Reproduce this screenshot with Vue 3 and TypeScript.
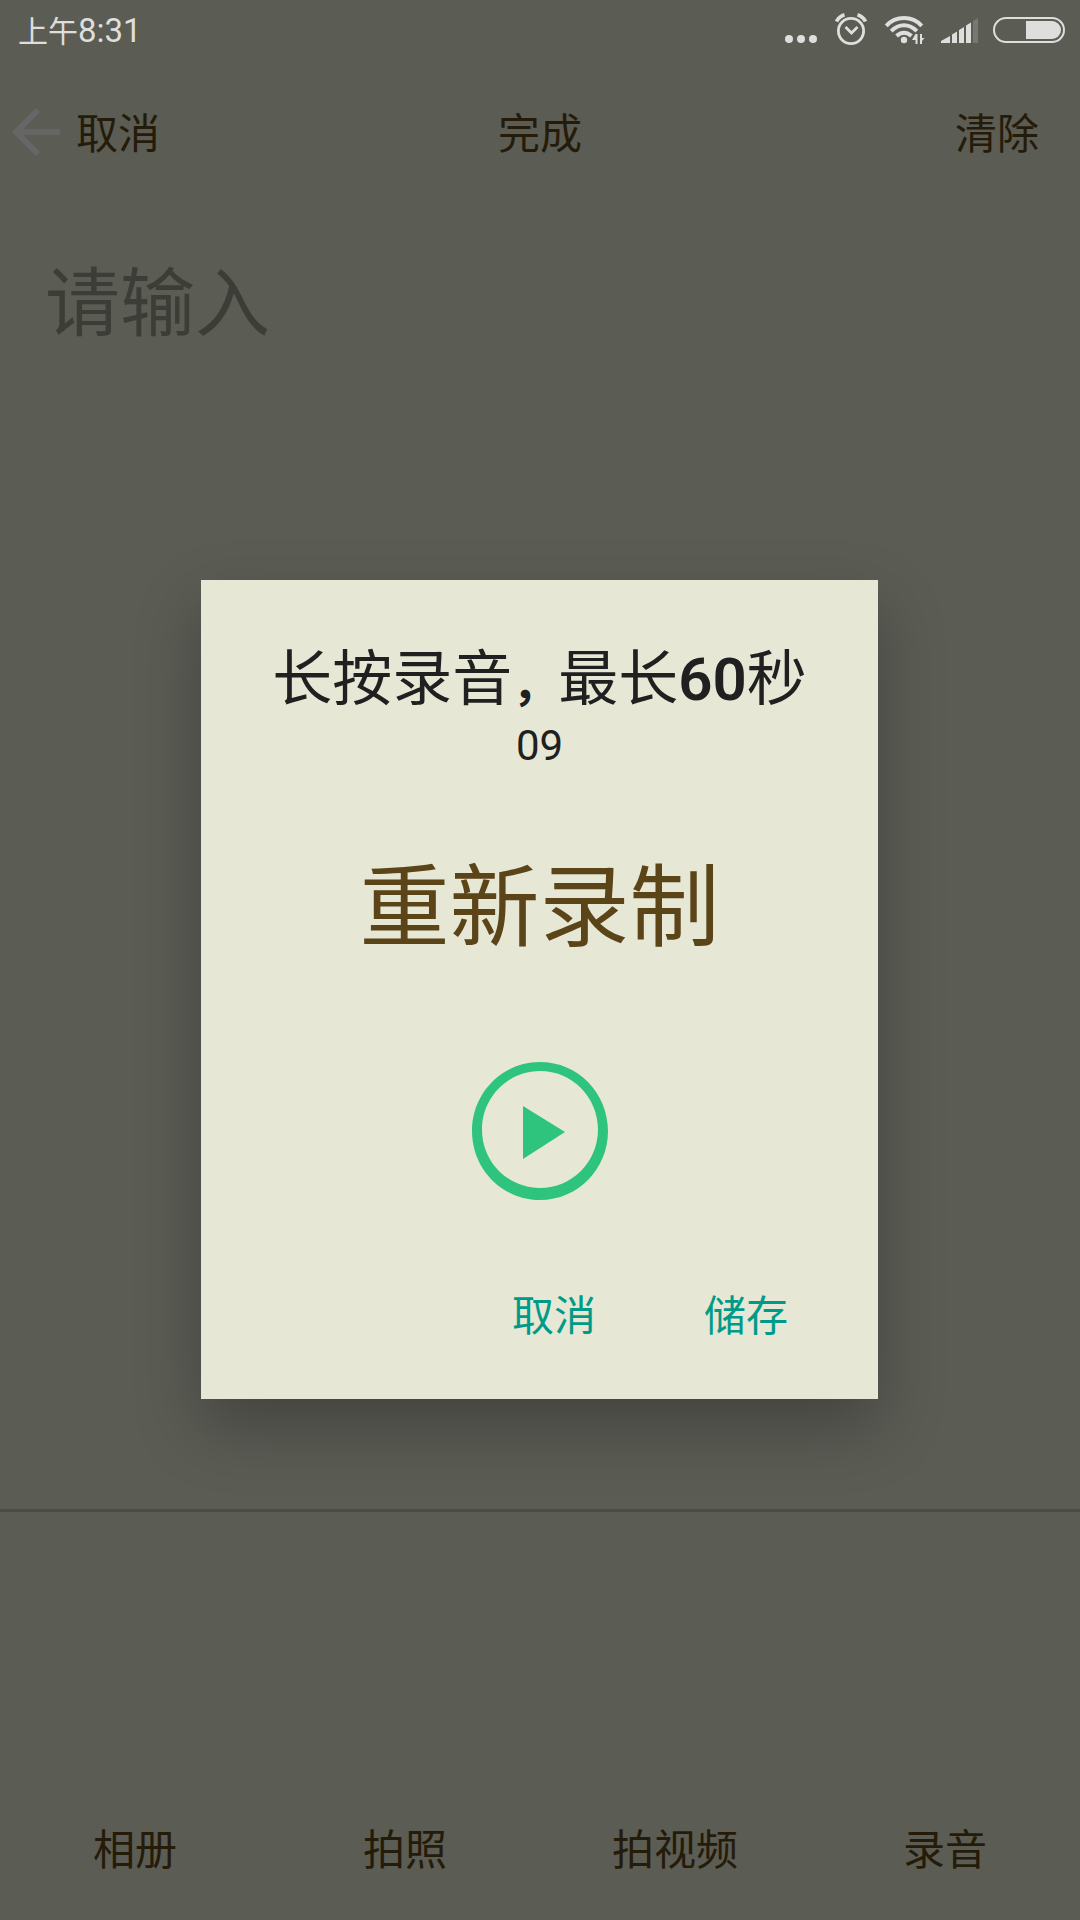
<script setup lang="ts">
import { ref } from 'vue'

const note = ref('')
const seconds = ref('09')
const tools = ['相册', '拍照', '拍视频', '录音']
</script>

<template>
  <div class="screen">
    <div class="status">
      <div class="time"><span class="period">上午</span>8:31</div>
      <div class="icons">
        <svg width="32" height="40" viewBox="0 0 32 40" fill="#dededc">
          <circle cx="2" cy="29" r="4" />
          <circle cx="14" cy="29" r="4" />
          <circle cx="26" cy="29" r="4" />
        </svg>
        <svg width="32" height="40" viewBox="0 0 32 40" fill="none" stroke="#dededc">
          <circle cx="16" cy="21" r="12.6" stroke-width="2.8" />
          <path d="M10.5 17l6 6 6-6" stroke-width="2.8" />
          <path d="M1.500 11.500Q4 6.500 9.500 4.800M30.500 11.500Q28 6.500 22.500 4.800" stroke-width="3.8" />
        </svg>
        <svg width="40" height="40" viewBox="0 0 40 40" fill="none" stroke="#dededc">
          <path d="M3.200 15.800Q10.500 8 21 8T38.800 15.800" stroke-width="4" />
          <path d="M8.200 21.200Q13.800 15.200 21 15.200T33.800 21.200" stroke-width="4" />
          <path d="M13.600 26Q16.800 22.800 21 22.800T28.400 26" stroke-width="4" />
          <circle cx="21" cy="30" r="3.2" fill="#dededc" stroke="none" />
          <path d="M32.500 24h2v10h-2v-4h-3.500zM37 24h2v4h2.500l-2.500 3v3h-2z" fill="#dededc" stroke="none" />
        </svg>
        <svg width="38" height="40" viewBox="0 0 38 40" fill="#dededc">
          <path d="M2 33v-2l9-5v7zM13 33V24.500l5-3V33zM20 33V20l5-3v16zM27 33V15.500l5-3V33z" />
          <path d="M34 33V11l5-3v25z" fill="#777871" />
        </svg>
        <svg width="72" height="40" viewBox="0 0 72 40">
          <rect x="1" y="8" width="70" height="24" rx="12" fill="none" stroke="#dededc" stroke-width="2" />
          <path d="M33 11h26a9 9 0 0 1 0 18H33z" fill="#dededc" />
        </svg>
      </div>
    </div>

    <header class="bar">
      <button class="back" type="button">
        <svg width="52" height="54" viewBox="0 0 52 54" fill="none" stroke="#666666" stroke-width="6">
          <path d="M50 27H7M28 5L6 27l22 22" />
        </svg>
        取消
      </button>
      <button type="button">完成</button>
      <button class="clear" type="button">清除</button>
    </header>

    <textarea v-model="note" class="note" placeholder="请输入" aria-label="请输入"></textarea>
    <div class="attachments"></div>
    <nav class="tools">
      <button v-for="tool in tools" :key="tool" type="button">{{ tool }}</button>
    </nav>

    <div class="overlay">
      <section class="dialog" role="dialog" aria-labelledby="record-title">
        <h1 id="record-title">长按录音<span class="comma">，</span>最长<b>60</b>秒</h1>
        <p class="seconds">{{ seconds }}</p>
        <button class="record" type="button">重新录制</button>
        <button class="play" type="button" aria-label="播放">
          <svg width="136" height="138" viewBox="0 0 136 138">
            <path
              fill="#2ec47e" fill-rule="evenodd"
              d="M68 0C106 0 136 31 136 69S106 138 68 138 0 107 0 69 30 0 68 0ZM68 9C36 9 10 35 10 67.500S36 126 68 126 126 100 126 67.500 100 9 68 9Z"
            />
            <path fill="#2ec47e" d="M51 44l42 26-42 27z" />
          </svg>
        </button>
        <div class="actions">
          <button type="button">取消</button>
          <button type="button">储存</button>
        </div>
      </section>
    </div>
  </div>
</template>

<style>
body {
  margin: 0;
  background: #5b5c54;
}
</style>

<style scoped>
.screen {
  display: flex;
  flex-direction: column;
  min-height: 100vh;
  background: #5b5c54;
  color: #251b09;
  font-family: Roboto, "Noto Sans CJK SC", sans-serif;
  font-size: 42px;
}

button {
  padding: 0;
  border: 0;
  background: none;
  color: inherit;
  font: inherit;
  line-height: 60px;
}

svg {
  display: block;
  overflow: visible;
}

.status {
  display: flex;
  align-items: center;
  justify-content: space-between;
  height: 60px;
  padding: 0 15px 0 18px;
  color: #dededc;
}

.time {
  padding-top: 2px;
  font-size: 33px;
  line-height: 60px;
}

.period {
  font-size: 30px;
}

.icons {
  display: flex;
  gap: 16px;
}

.bar {
  display: grid;
  grid-template-columns: 1fr auto 1fr;
  align-items: center;
  box-sizing: border-box;
  height: 146px;
  padding: 4px 10px 0;
}

.back {
  display: flex;
  align-items: flex-start;
  gap: 14px;
}

.clear {
  justify-self: end;
  margin-right: 31px;
}

.note {
  flex: 1;
  box-sizing: border-box;
  width: 100%;
  padding: 48px 45px;
  border: 0;
  outline: 0;
  resize: none;
  background: none;
  color: #251b09;
  font-family: inherit;
  font-size: 75px;
  line-height: 100px;
}

.note::placeholder {
  color: #3c3d37;
  opacity: 1;
}

.attachments {
  height: 266px;
  border-top: 3px solid #4a4a47;
}

.tools {
  display: grid;
  grid-template-columns: repeat(4, 1fr);
  box-sizing: border-box;
  height: 142px;
  padding-top: 4px;
}

.overlay {
  position: absolute;
  inset: 0;
  display: flex;
  align-items: center;
  justify-content: center;
  padding: 60px 1px 1px 0;
}

.dialog {
  display: flex;
  flex-direction: column;
  align-items: center;
  box-sizing: border-box;
  width: 90%;
  max-width: 677px;
  padding: 60px 0 28px;
  background: #e6e7d5;
  color: #202020;
  box-shadow: 0 28px 60px rgba(0, 0, 0, 0.26);
}

h1 {
  margin: 0;
  font-size: 60px;
  font-weight: 400;
  line-height: 80px;
  white-space: nowrap;
}

h1 b {
  font-weight: 600;
}

.comma {
  font-size: 46px;
  font-weight: 700;
  line-height: 46px;
}

.seconds {
  margin: 0;
  line-height: 52px;
}

.record {
  margin-top: 77px;
  color: #5a4418;
  font-size: 90px;
  line-height: 120px;
}

.play {
  margin-top: 93px;
}

.actions {
  display: flex;
  align-self: flex-end;
  margin-top: 63px;
  padding-right: 36px;
  color: #009b88;
}

.actions button {
  width: 192px;
  line-height: 108px;
}
</style>
